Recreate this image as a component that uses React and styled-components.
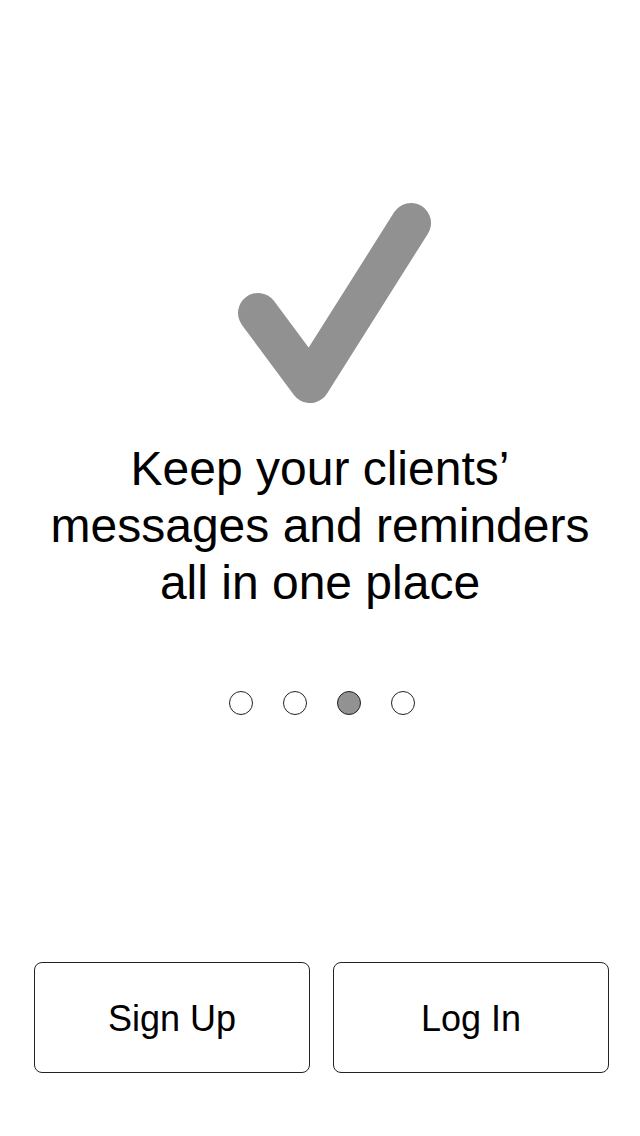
import React from 'react'
import styled, { createGlobalStyle } from 'styled-components'

const GlobalStyle = createGlobalStyle`
  html, body {
    margin: 0;
    padding: 0;
    background: #ffffff;
  }
  body {
    font-family: "Liberation Sans", Arial, sans-serif;
  }
`

const Screen = styled.div`
  width: 640px;
  min-height: 1136px;
  box-sizing: border-box;
  display: flex;
  flex-direction: column;
  align-items: center;
  padding: 195px 0 63px;
  background: #ffffff;
`

const CheckIcon = styled.svg`
  display: block;
  width: 240px;
  height: 215px;
`

const Headline = styled.h1`
  margin: 30px 0 0;
  font-size: 48px;
  font-weight: 400;
  line-height: 57px;
  text-align: center;
  color: #000000;
`

const Dots = styled.div`
  display: flex;
  gap: 30px;
  margin-top: 80px;
  margin-left: 4px;
`

const Dot = styled.span`
  width: 24px;
  height: 24px;
  box-sizing: border-box;
  border-radius: 50%;
  border: 1px solid #222222;
  background: ${p => (p.$active ? '#929292' : '#ffffff')};
`

const Actions = styled.div`
  margin-top: auto;
  width: 100%;
  box-sizing: border-box;
  display: flex;
  gap: 23px;
  padding: 0 31px 0 34px;
`

const ActionButton = styled.button`
  flex: 1;
  height: 111px;
  border: 1px solid #222222;
  border-radius: 8px;
  background: #ffffff;
  color: #000000;
  font-family: "Liberation Sans", Arial, sans-serif;
  font-size: 36px;
  padding: 3px 0 0;
  cursor: pointer;
`

const slides = [0, 1, 2, 3]

export default function App() {
  const current = 2
  return (
    <>
      <GlobalStyle />
      <Screen>
        <CheckIcon viewBox="0 0 240 215">
          <path
            d="M58 118 L110 188 L211 28"
            fill="none"
            stroke="#919191"
            strokeWidth="40"
            strokeLinecap="round"
            strokeLinejoin="round"
          />
        </CheckIcon>
        <Headline>
          Keep your clients’
          <br />
          messages and reminders
          <br />
          all in one place
        </Headline>
        <Dots>
          {slides.map(i => (
            <Dot key={i} $active={i === current} />
          ))}
        </Dots>
        <Actions>
          <ActionButton>Sign Up</ActionButton>
          <ActionButton>Log In</ActionButton>
        </Actions>
      </Screen>
    </>
  )
}
